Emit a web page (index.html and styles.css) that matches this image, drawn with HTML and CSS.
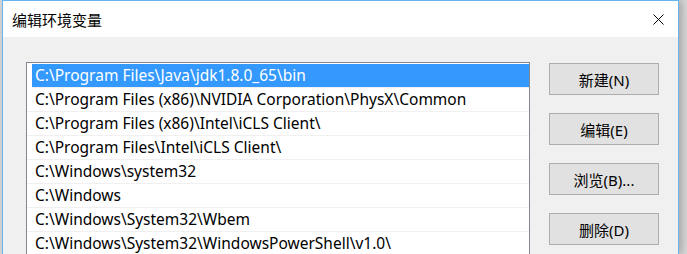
FILE: index.html
```html
<!DOCTYPE html>
<html lang="zh-CN">
<head>
    <meta charset="UTF-8">
    <meta name="viewport" content="width=device-width, initial-scale=1.0">
    <title>编辑环境变量</title>
    <link rel="stylesheet" href="styles.css">
</head>
<body>
    <div class="window">
        <div class="titlebar">
            <span class="title">编辑环境变量</span>
            <span class="close">
                <svg width="11" height="11" viewBox="0 0 11 11">
                    <path d="M0.5 0.5 L10.5 10.5 M10.5 0.5 L0.5 10.5" stroke="#000" stroke-width="1" fill="none"/>
                </svg>
            </span>
        </div>
        <div class="content">
            <div class="path-list">
                <div class="row selected">C:\Program Files\Java\jdk1.8.0_65\bin</div>
                <div class="row">C:\Program Files (x86)\NVIDIA Corporation\PhysX\Common</div>
                <div class="row">C:\Program Files (x86)\Intel\iCLS Client\</div>
                <div class="row">C:\Program Files\Intel\iCLS Client\</div>
                <div class="row">C:\Windows\system32</div>
                <div class="row">C:\Windows</div>
                <div class="row">C:\Windows\System32\Wbem</div>
                <div class="row">C:\Windows\System32\WindowsPowerShell\v1.0\</div>
            </div>
            <div class="buttons">
                <button>新建(N)</button>
                <button>编辑(E)</button>
                <button>浏览(B)...</button>
                <button>删除(D)</button>
            </div>
        </div>
    </div>
</body>
</html>
```

FILE: styles.css
```css
body {
    margin: 0;
    background: #d9d9d9;
    font-family: 'Noto Sans', 'Noto Sans CJK SC', sans-serif;
    font-size: 15px;
    color: #000;
    overflow: hidden;
    height: 254px;
}

.window {
    margin-left: 2px;
    width: 675px;
    height: 253px;
    overflow: hidden;
    border: 1px solid #66b5f0;
    border-bottom: none;
    background: #f0f0f0;
    box-shadow: 3px 0 8px rgba(0, 0, 0, 0.25);
}

.titlebar {
    height: 36px;
    background: #fff;
    display: flex;
    align-items: center;
    padding: 0 14px 0 9px;
}

.title {
    font-family: 'Noto Sans CJK SC', sans-serif;
    font-size: 15px;
}

.close {
    margin-left: auto;
    display: flex;
}

.content {
    display: flex;
    gap: 19px;
    padding: 25px 0 0 23px;
}

.path-list {
    width: 502px;
    height: 191px;
    overflow: hidden;
    border: 1px solid #828790;
    border-bottom: none;
    background: #fff;
    padding-top: 1px;
    font-size: 15.5px;
}

.row {
    height: 23px;
    line-height: 23px;
    border-bottom: 1px solid #f0f0f0;
    padding-left: 8px;
    white-space: nowrap;
}

.row.selected {
    margin-left: 5px;
    padding-left: 3px;
    background: #3399ff;
    color: #fff;
}

.buttons {
    display: flex;
    flex-direction: column;
    gap: 18px;
    padding-top: 1px;
}

button {
    width: 110px;
    height: 32px;
    background: #e1e1e1;
    border: 1px solid #adadad;
    font-family: 'Noto Sans', 'Noto Sans CJK SC', sans-serif;
    font-size: 15px;
    color: #000;
    padding: 0;
}
```
